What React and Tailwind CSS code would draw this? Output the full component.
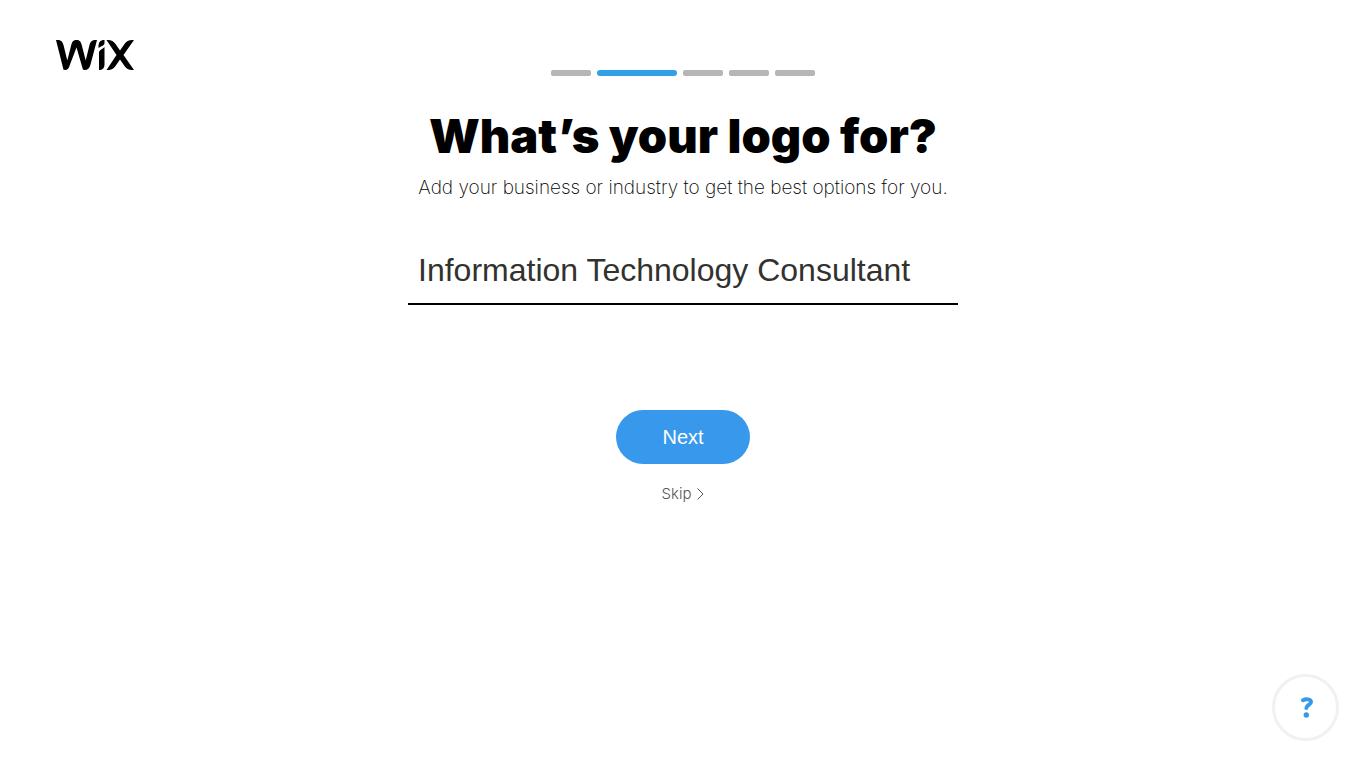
import React, { useState } from "react";

const steps = [1, 2, 3, 4, 5];
const currentStep = 2;

const WixLogo = () => (
  <svg viewBox="0 0 78 31" className="w-[78px] h-[31px]" aria-hidden="true">
    <path d="M0 1C5 .6 6.500 2.500 7.500 6L11.300 21.500L15 7C16 2.500 17.500 1 20.500 1C23.500 1 25 2.500 26 7L29.700 21.500L33.500 6C34.500 2 36.500 .6 41 1L34.500 25.500C33.300 30 31 31.500 27 30.800L20.500 8.500L14 25.500C12.800 30 11 31.500 7.500 30.800Z" />
    <path d="M48.500 1V3.500C48.500 7 46 6.500 42.500 9C42.300 4 43.500 1 48.500 1ZM48.500 8V25C48.500 29.500 46.500 31.200 43 31V14C43 10.500 46.500 10.500 48.500 8Z" />
    <path d="M50.500 1C55 .6 57.300 2 59.500 5L64 11.500L68.500 5C70.700 2 73 .6 78 1L67.500 16L78 31C73 31.400 70.700 30 68.500 27L64 20.500L59.500 27C57.300 30 55 31.400 50.500 31L60.500 16Z" />
  </svg>
);

const Progress = () => (
  <div className="flex justify-center gap-1.5">
    {steps.map((step) => (
      <div
        key={step}
        className={
          step === currentStep
            ? "w-20 h-1.5 rounded-full bg-[#329fe9]"
            : "w-10 h-1.5 rounded-xs bg-[#b6b6b6]"
        }
      />
    ))}
  </div>
);

const App = () => {
  const [industry, setIndustry] = useState("Information Technology Consultant");

  return (
    <div className="relative min-h-screen bg-white text-black font-['Liberation_Sans',Arial,sans-serif]">
      <a href="#" aria-label="Wix" className="absolute left-14 top-[39px]">
        <WixLogo />
      </a>

      <main className="flex flex-col items-center px-4 pt-[70px]">
        <Progress />
        <h1 className="mt-8 text-[47px] leading-14 font-black text-center font-['Inter',sans-serif]">
          What’s your logo for?
        </h1>
        <p className="mt-3 text-[19px] leading-6 font-extralight text-center font-['Inter',sans-serif]">
          Add your business or industry to get the best options for you.
        </p>
        <input
          type="text"
          aria-label="Business or industry"
          value={industry}
          onChange={(e) => setIndustry(e.target.value)}
          className="mt-9 w-full max-w-[550px] h-[69px] pt-0.5 px-2.5 text-[32px] text-[#32322f] border-b-2 border-black outline-none"
        />
        <button
          type="button"
          className="mt-[105px] w-[134px] h-[54px] rounded-full bg-[#3899ec] text-white text-xl cursor-pointer"
        >
          Next
        </button>
        <button
          type="button"
          className="mt-5 flex items-center gap-1.5 text-[15px] leading-5 font-light text-[#555] cursor-pointer font-['Inter',sans-serif]"
        >
          Skip
          <svg viewBox="0 0 7 12" className="w-[7px] h-3" fill="none" stroke="currentColor">
            <path d="M0.500 0.500L6 6L0.500 11.500" />
          </svg>
        </button>
      </main>

      <button
        type="button"
        aria-label="Help"
        className="fixed right-[27px] bottom-[27px] w-[67px] h-[67px] flex items-center justify-center rounded-full border-3 border-[#f1f1f1] bg-white text-[#3899ec] cursor-pointer"
      >
        <svg viewBox="0 0 14 21" className="w-3.5 h-[21px] ml-0.5" fill="none">
          <path
            d="M3 3.200C5.500 1.800 11 1.800 11 5C11 8 6.300 8 6.300 11"
            stroke="currentColor"
            strokeWidth="4"
            strokeLinecap="round"
          />
          <circle cx="6.300" cy="18" r="2.700" fill="currentColor" />
        </svg>
      </button>
    </div>
  );
};

export default App;
